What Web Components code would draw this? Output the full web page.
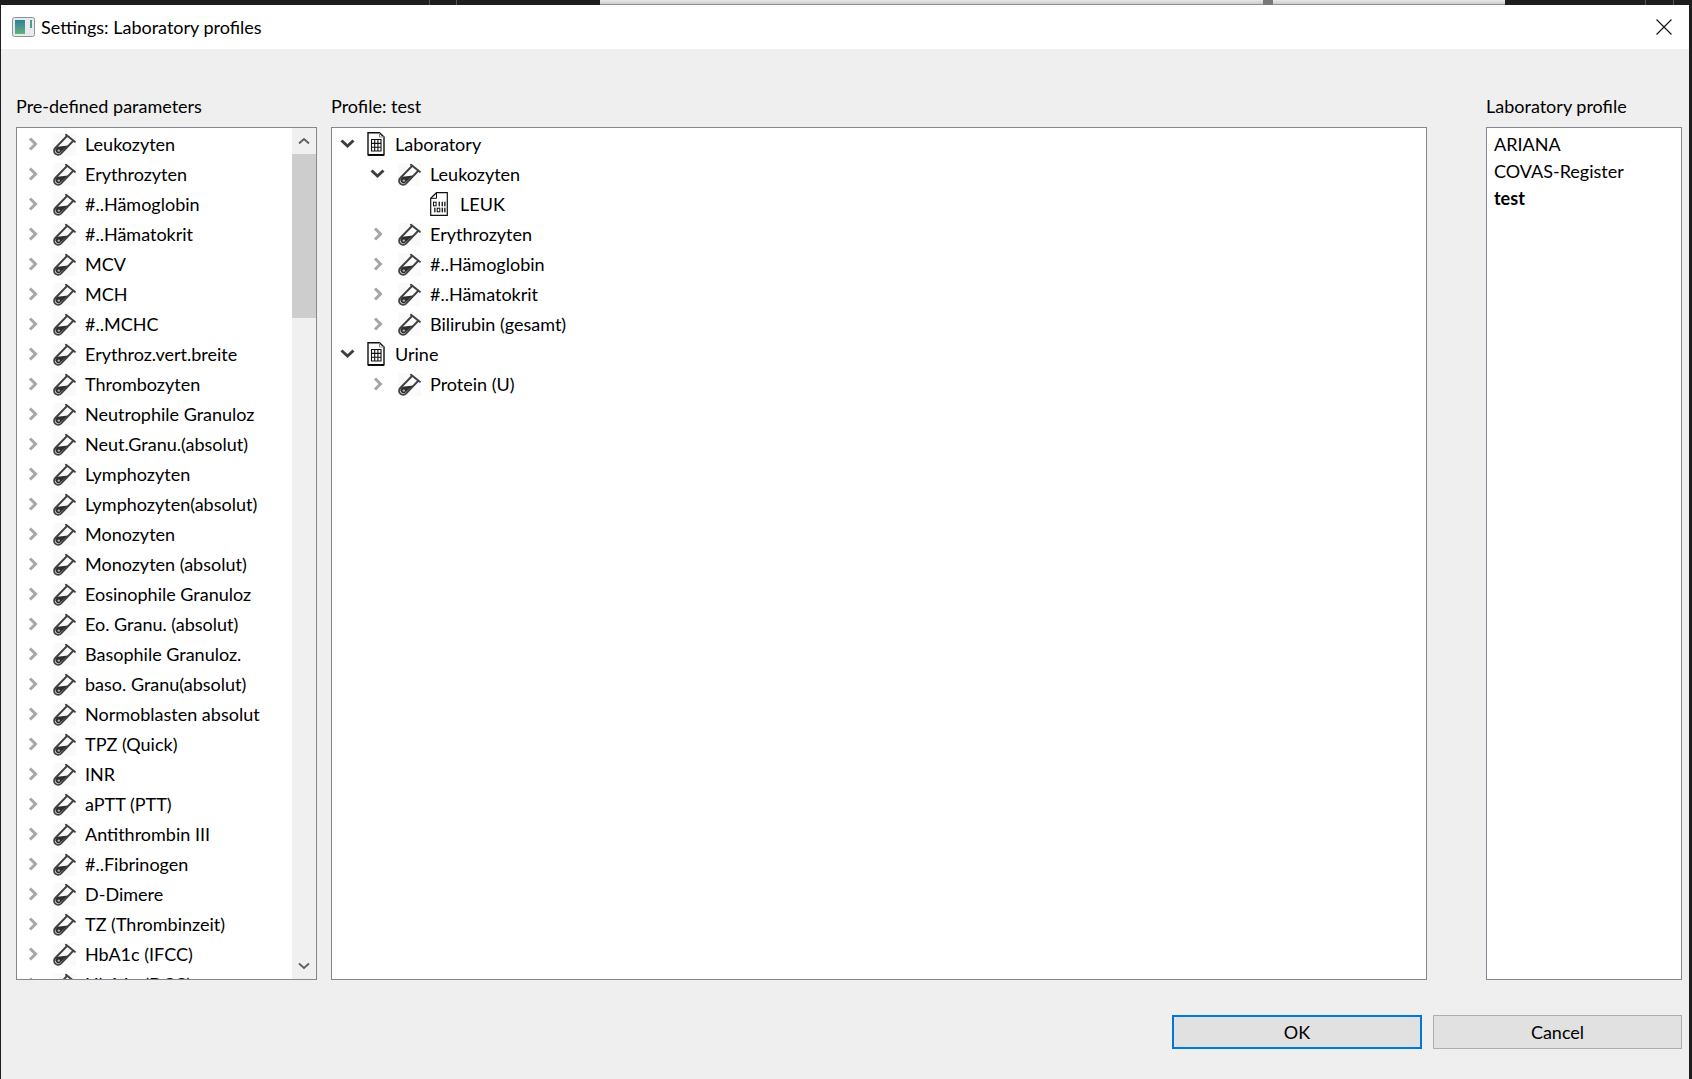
<!DOCTYPE html>
<html>
<head>
<meta charset="utf-8">
<title>Settings: Laboratory profiles</title>
<style>
    html, body { margin: 0; height: 100%; background: #1e1e1e; }
    body { font-family: Lato, "Open Sans", sans-serif; font-size: 18px; color: #000; }
</style>
</head>
<body>
<lab-dialog>
    <tree-panel slot="left" label="Pre-defined parameters" scroll>
        <tree-row icon="tube" state="closed">Leukozyten</tree-row>
        <tree-row icon="tube" state="closed">Erythrozyten</tree-row>
        <tree-row icon="tube" state="closed">#..Hämoglobin</tree-row>
        <tree-row icon="tube" state="closed">#..Hämatokrit</tree-row>
        <tree-row icon="tube" state="closed">MCV</tree-row>
        <tree-row icon="tube" state="closed">MCH</tree-row>
        <tree-row icon="tube" state="closed">#..MCHC</tree-row>
        <tree-row icon="tube" state="closed">Erythroz.vert.breite</tree-row>
        <tree-row icon="tube" state="closed">Thrombozyten</tree-row>
        <tree-row icon="tube" state="closed">Neutrophile Granuloz</tree-row>
        <tree-row icon="tube" state="closed">Neut.Granu.(absolut)</tree-row>
        <tree-row icon="tube" state="closed">Lymphozyten</tree-row>
        <tree-row icon="tube" state="closed">Lymphozyten(absolut)</tree-row>
        <tree-row icon="tube" state="closed">Monozyten</tree-row>
        <tree-row icon="tube" state="closed">Monozyten (absolut)</tree-row>
        <tree-row icon="tube" state="closed">Eosinophile Granuloz</tree-row>
        <tree-row icon="tube" state="closed">Eo. Granu. (absolut)</tree-row>
        <tree-row icon="tube" state="closed">Basophile Granuloz.</tree-row>
        <tree-row icon="tube" state="closed">baso. Granu(absolut)</tree-row>
        <tree-row icon="tube" state="closed">Normoblasten absolut</tree-row>
        <tree-row icon="tube" state="closed">TPZ (Quick)</tree-row>
        <tree-row icon="tube" state="closed">INR</tree-row>
        <tree-row icon="tube" state="closed">aPTT (PTT)</tree-row>
        <tree-row icon="tube" state="closed">Antithrombin III</tree-row>
        <tree-row icon="tube" state="closed">#..Fibrinogen</tree-row>
        <tree-row icon="tube" state="closed">D-Dimere</tree-row>
        <tree-row icon="tube" state="closed">TZ (Thrombinzeit)</tree-row>
        <tree-row icon="tube" state="closed">HbA1c (IFCC)</tree-row>
        <tree-row icon="tube" state="closed">HbA1c (DCC)</tree-row>
    </tree-panel>

    <tree-panel slot="middle" label="Profile: test">
        <tree-row level="0" icon="sheet" state="open">Laboratory</tree-row>
        <tree-row level="1" icon="tube" state="open">Leukozyten</tree-row>
        <tree-row level="2" icon="binary">LEUK</tree-row>
        <tree-row level="1" icon="tube" state="closed">Erythrozyten</tree-row>
        <tree-row level="1" icon="tube" state="closed">#..Hämoglobin</tree-row>
        <tree-row level="1" icon="tube" state="closed">#..Hämatokrit</tree-row>
        <tree-row level="1" icon="tube" state="closed">Bilirubin (gesamt)</tree-row>
        <tree-row level="0" icon="sheet" state="open">Urine</tree-row>
        <tree-row level="1" icon="tube" state="closed">Protein (U)</tree-row>
    </tree-panel>

    <tree-panel slot="right" label="Laboratory profile" flat>
        <profile-item>ARIANA</profile-item>
        <profile-item>COVAS-Register</profile-item>
        <profile-item current>test</profile-item>
    </tree-panel>

    <lab-button slot="buttons" focused>OK</lab-button>
    <lab-button slot="buttons">Cancel</lab-button>
</lab-dialog>

<script>
const ICONS = {
    tube: `<svg width="23" height="23" viewBox="0 0 23 23" fill="none">
        <rect width="23" height="23" fill="#fafafa"/>
        <path d="M13 1.8 L21.8 8.8" stroke="#404040" stroke-width="2" stroke-linecap="round"/>
        <path d="M14.5 2.5 L2.3 15 A4 4 0 0 0 8 20.7 L20.5 7.5" stroke="#404040" stroke-width="1.9"/>
        <path d="M4.5 13.8 L15 12.5 L7.5 19.5 A2.7 2.7 0 0 1 3.5 15 Z" fill="#2e2e2e"/>
        <circle cx="5.8" cy="17.6" r="1.2" fill="#b5b5b5"/>
    </svg>`,
    sheet: `<svg width="18" height="24" viewBox="0 0 18 24" fill="none">
        <path d="M1 .7 H12.5 L17 5 V22.8 H1 Z" fill="#fff" stroke="#111" stroke-width="1.4"/>
        <path d="M12.5 .7 V5 H17" stroke="#8a8a8a"/>
        <path d="M1 23 H17" stroke="#000" stroke-width="1.8"/>
        <path d="M4.5 7.5 H14 V19 H4.5 Z M4.5 11.4 H14 M4.5 15.2 H14 M7.7 7.5 V19 M10.9 7.5 V19" stroke="#111" stroke-width="1.1"/>
    </svg>`,
    binary: `<svg width="18" height="24" viewBox="0 0 18 24" fill="none">
        <path d="M6.5 .7 H17.3 V23.3 H.7 V6.3 Z" fill="#fff" stroke="#111" stroke-width="1.2"/>
        <path d="M6.5 .7 V6.3 H.7" stroke="#111"/>
        <rect x="3.5" y="10.2" width="2.6" height="3.6" stroke="#111"/>
        <rect x="7.2" y="16.2" width="2.6" height="3.6" stroke="#111"/>
        <g fill="#111">
            <rect x="8.6" y="9.7" width="1.3" height="4.6"/><rect x="11.6" y="9.7" width="1.3" height="4.6"/><rect x="14.2" y="9.7" width="1.3" height="4.6"/>
            <rect x="4.2" y="15.7" width="1.3" height="4.6"/><rect x="11.6" y="15.7" width="1.3" height="4.6"/><rect x="14.2" y="15.7" width="1.3" height="4.6"/>
        </g>
    </svg>`,
    closed: `<svg width="10" height="14" viewBox="0 0 10 14" fill="none"><path d="M2 1.5 L7.5 7 L2 12.5" stroke="#a6a6a6" stroke-width="3"/></svg>`,
    open: `<svg width="15" height="10" viewBox="0 0 15 10" fill="none" style="margin-left:-2px"><path d="M1.5 1.5 L7.5 7 L13.5 1.5" stroke="#3f3f3f" stroke-width="3"/></svg>`
};

class LabDialog extends HTMLElement {
    constructor() {
        super();
        this.attachShadow({ mode: 'open' });
        this.shadowRoot.innerHTML = `
            <style>
                :host { display: flex; flex-direction: column; height: 100vh; box-sizing: border-box; }
                /* sliver of the window behind the dialog */
                .strip { display: flex; flex: none; height: 5px; background: #1e1e1e; }
                .strip i { flex: none; width: 1px; background: #555; }
                .strip .chrome { flex: none; width: 905px; display: flex; background: linear-gradient(#e8e8e8, #cfcfcf 70%, #6e6e6e); }
                .strip .chrome b { flex: none; width: 10px; margin-left: 663px; background: #77797c; }
                .window { flex: 1; display: flex; flex-direction: column; margin: 0 3px 0 1px; background: #efefef; min-height: 0; }
                .title { flex: none; height: 44px; display: flex; align-items: center; background: #fff; padding: 0 17px 0 11px; gap: 5px; }
                .title span { flex: 1; }
                .panels { flex: 1; min-height: 0; display: grid; grid-template-columns: 301px 1fr 241px; gap: 14px; padding: 46px 7px 0 15px; }
                ::slotted([slot="right"]) { margin-left: 45px; }
                .footer { flex: none; display: flex; justify-content: flex-end; gap: 11px; padding: 35px 7px 30px 0; }
            </style>
            <div class="strip">
                <div style="width:429px"></div><i></i>
                <div style="width:26px"></div><i></i>
                <div style="width:143px"></div>
                <div class="chrome"><b></b></div>
                <div style="width:140px"></div><i></i>
                <div style="width:27px"></div><i></i>
            </div>
            <div class="window">
                <div class="title">
                    <svg width="24" height="20" viewBox="0 0 24 20">
                        <rect x=".5" y=".5" width="22" height="19" rx="2" fill="#e8eaec" stroke="#8d9499"/>
                        <defs><linearGradient id="g" x1="0" y1="0" x2="0" y2="1"><stop offset="0" stop-color="#2f7f9e"/><stop offset="1" stop-color="#5fb27c"/></linearGradient></defs>
                        <rect x="3" y="3" width="10" height="14" fill="url(#g)"/>
                        <rect x="18" y="3" width="2" height="8" fill="#4f9a8c"/>
                    </svg>
                    <span>Settings: Laboratory profiles</span>
                    <svg width="16" height="16" viewBox="0 0 16 16"><path d="M.5 .5 L15.5 15.5 M15.5 .5 L.5 15.5" stroke="#111" stroke-width="1.1"/></svg>
                </div>
                <div class="panels">
                    <slot name="left"></slot>
                    <slot name="middle"></slot>
                    <slot name="right"></slot>
                </div>
                <div class="footer"><slot name="buttons"></slot></div>
            </div>
        `;
    }
}

class TreePanel extends HTMLElement {
    constructor() {
        super();
        this.attachShadow({ mode: 'open' });
    }

    connectedCallback() {
        const scroll = this.hasAttribute('scroll');
        this.shadowRoot.innerHTML = `
            <style>
                :host { display: flex; flex-direction: column; min-height: 0; min-width: 0; }
                .label { flex: none; height: 22px; line-height: 22px; margin-bottom: 10px; white-space: nowrap; }
                .box { flex: 1; min-height: 0; display: flex; background: #fff; border: 1px solid #828790; }
                .list { flex: 1; min-width: 0; overflow: hidden; padding-top: 1px; }
                :host([flat]) .list { padding-top: 3px; }
                .bar { flex: none; width: 24px; display: flex; flex-direction: column; background: #f0f0f0; }
                .btn { flex: none; height: 26px; display: flex; align-items: center; justify-content: center; }
                .track { flex: 1; }
                .thumb { height: 164px; background: #cdcdcd; }
            </style>
            <div class="label">${this.getAttribute('label') || ''}</div>
            <div class="box">
                <div class="list"><slot></slot></div>
                ${scroll ? `<div class="bar">
                    <div class="btn"><svg width="12" height="8" viewBox="0 0 12 8" fill="none"><path d="M1 6.5 L6 2 L11 6.5" stroke="#606060" stroke-width="1.8"/></svg></div>
                    <div class="track"><div class="thumb"></div></div>
                    <div class="btn"><svg width="12" height="8" viewBox="0 0 12 8" fill="none"><path d="M1 1.5 L6 6 L11 1.5" stroke="#606060" stroke-width="1.8"/></svg></div>
                </div>` : ''}
            </div>
        `;
    }
}

class TreeRow extends HTMLElement {
    constructor() {
        super();
        this.attachShadow({ mode: 'open' });
    }

    connectedCallback() {
        const level = Number(this.getAttribute('level') || 0);
        const state = this.getAttribute('state');
        const icon = this.getAttribute('icon');
        this.shadowRoot.innerHTML = `
            <style>
                :host { display: flex; align-items: center; height: 30px; white-space: nowrap; }
                .toggle { flex: none; width: 24px; margin-left: ${4 + level * 30}px; display: flex; align-items: center; justify-content: center; }
                .icon { flex: none; width: 24px; margin-left: 7px; display: flex; align-items: center; justify-content: center; }
                .text { margin-left: 9px; }
                /* the sheet icon sits in a narrower slot than the 23px tubes */
                :host([icon="sheet"]) .icon { width: 18px; }
                :host([icon="sheet"]) .text { margin-left: 10px; }
            </style>
            <div class="toggle">${state ? ICONS[state] : ''}</div>
            <div class="icon">${ICONS[icon] || ''}</div>
            <div class="text"><slot></slot></div>
        `;
    }
}

class ProfileItem extends HTMLElement {
    constructor() {
        super();
        this.attachShadow({ mode: 'open' });
        this.shadowRoot.innerHTML = `
            <style>
                :host { display: block; height: 27px; line-height: 27px; padding-left: 7px; white-space: nowrap; }
                :host([current]) { font-weight: 700; }
            </style>
            <slot></slot>
        `;
    }
}

class LabButton extends HTMLElement {
    constructor() {
        super();
        this.attachShadow({ mode: 'open' });
        this.shadowRoot.innerHTML = `
            <style>
                :host { display: flex; align-items: center; justify-content: center; box-sizing: border-box; width: 249px; height: 34px; background: #e1e1e1; border: 1px solid #adadad; }
                :host([focused]) { width: 250px; border: 2px solid #0078d7; }
            </style>
            <slot></slot>
        `;
    }
}

customElements.define('lab-dialog', LabDialog);
customElements.define('tree-panel', TreePanel);
customElements.define('tree-row', TreeRow);
customElements.define('profile-item', ProfileItem);
customElements.define('lab-button', LabButton);
</script>
</body>
</html>
